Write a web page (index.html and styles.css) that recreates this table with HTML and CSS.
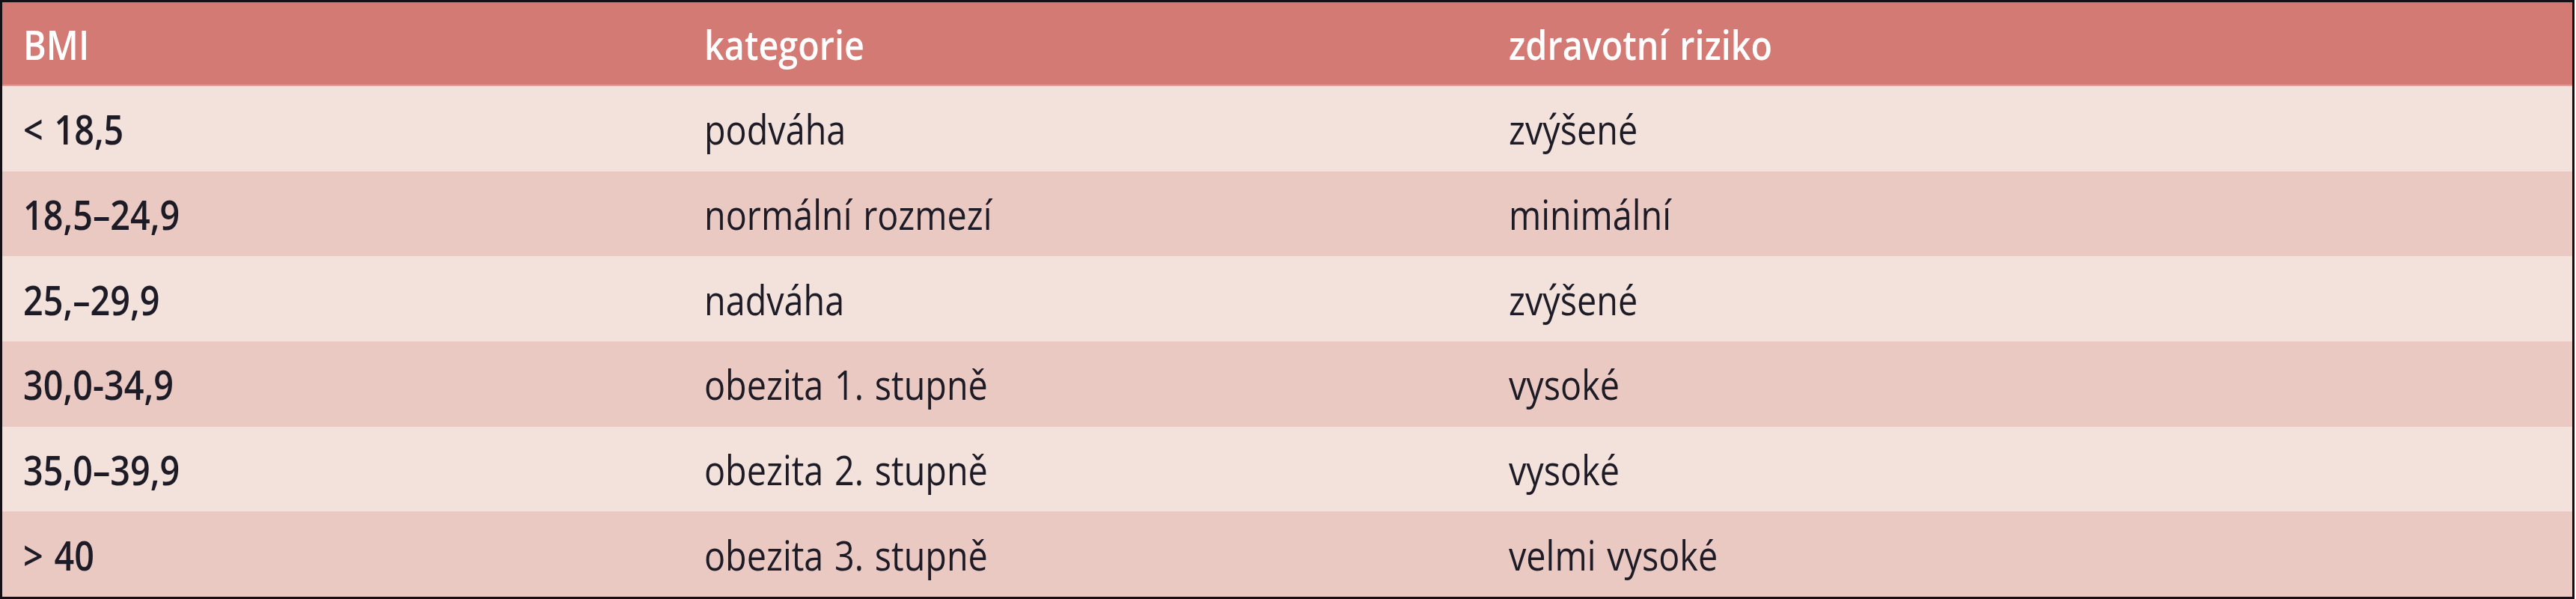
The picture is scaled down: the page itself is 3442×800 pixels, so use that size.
FILE: index.html
```html
<!DOCTYPE html>
<html lang="cs">
<head>
<meta charset="utf-8">
<title>BMI</title>
<link rel="stylesheet" href="styles.css">
</head>
<body>
<div class="bmi-table">
  <div class="row head">
    <div class="cell c1"><span>BMI</span></div>
    <div class="cell"><span>kategorie</span></div>
    <div class="cell"><span>zdravotní riziko</span></div>
  </div>
  <div class="row light">
    <div class="cell c1"><span>&lt; 18,5</span></div>
    <div class="cell"><span>podváha</span></div>
    <div class="cell"><span>zvýšené</span></div>
  </div>
  <div class="row dark">
    <div class="cell c1"><span>18,5–24,9</span></div>
    <div class="cell"><span>normální rozmezí</span></div>
    <div class="cell"><span>minimální</span></div>
  </div>
  <div class="row light">
    <div class="cell c1"><span>25,–29,9</span></div>
    <div class="cell"><span>nadváha</span></div>
    <div class="cell"><span>zvýšené</span></div>
  </div>
  <div class="row dark">
    <div class="cell c1"><span>30,0-34,9</span></div>
    <div class="cell"><span>obezita 1. stupně</span></div>
    <div class="cell"><span>vysoké</span></div>
  </div>
  <div class="row light">
    <div class="cell c1"><span>35,0–39,9</span></div>
    <div class="cell"><span>obezita 2. stupně</span></div>
    <div class="cell"><span>vysoké</span></div>
  </div>
  <div class="row dark">
    <div class="cell c1"><span>&gt; 40</span></div>
    <div class="cell"><span>obezita 3. stupně</span></div>
    <div class="cell"><span>velmi vysoké</span></div>
  </div>
</div>
</body>
</html>
```
FILE: styles.css
```css
html, body {
  margin: 0;
  padding: 0;
  background: #ffffff;
}

.bmi-table {
  width: 3440px;
  height: 800px;
  box-sizing: border-box;
  border: 3px solid #141014;
  display: grid;
  grid-template-rows: 112px repeat(6, 1fr);
  font-family: "Open Sans", "Noto Sans", sans-serif;
  font-size: 55px;
  color: #1d1b26;
}

.row {
  display: grid;
  grid-template-columns: 910px 1075px 1fr;
  align-items: center;
}

.head {
  background: #d47a74;
  color: #ffffff;
  font-weight: 600;
  border-bottom: 2px solid #e29c97;
}

.light {
  background: #f3e2dc;
}

.dark {
  background: #ebc9c3;
}

.cell {
  padding-left: 28px;
  white-space: nowrap;
  line-height: 1;
  padding-top: 0;
}

.cell span {
  display: inline-block;
  transform: scaleX(0.85);
  transform-origin: 0 50%;
  word-spacing: 3px;
}

.c1 {
  font-weight: 600;
}
```
